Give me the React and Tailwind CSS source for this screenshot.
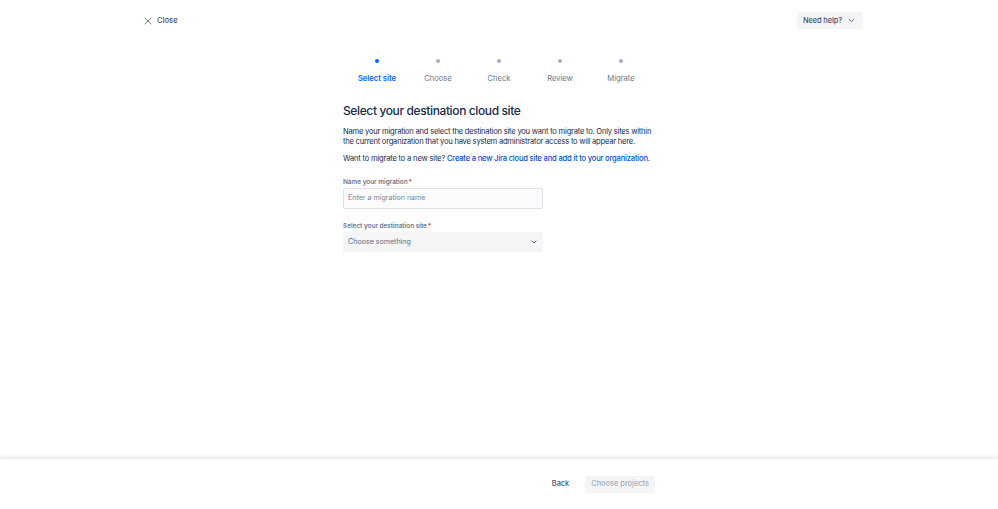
import { X, ChevronDown } from "lucide-react";

const steps = ["Select site", "Choose", "Check", "Review", "Migrate"];

function Stepper() {
  return (
    <div className="flex justify-center">
      {steps.map((s, i) => (
        <div key={s} className="w-[61px] flex flex-col items-center">
          <div
            className={
              i === 0
                ? "w-[4px] h-[4px] rounded-full bg-[#0065ff]"
                : "w-[4px] h-[4px] rounded-full bg-[#a5adba]"
            }
          />
          <div
            className={
              i === 0
                ? "mt-[10px] text-[7.6px] leading-[11px] font-semibold text-[#0065ff]"
                : "mt-[10px] text-[7.6px] leading-[11px] text-[#6b778c]"
            }
          >
            {s}
          </div>
        </div>
      ))}
    </div>
  );
}

export default function App() {
  return (
    <div
      className="h-screen flex flex-col bg-white text-[#172b4d]"
      style={{ fontFamily: "Inter, 'Noto Sans', sans-serif" }}
    >
      <div className="flex-1">
        {/* top bar */}
        <div className="w-[721px] ml-[142px] pt-[12px] flex items-center justify-between">
          <button className="flex items-center gap-[3px] h-[17px] text-[7.6px] font-medium text-[#42526e]">
            <X size={12} strokeWidth={1.5} />
            Close
          </button>
          <button className="flex items-center gap-[5px] h-[17px] pl-[6px] pr-[7px] rounded-[2px] bg-[#f4f5f7] text-[7.4px] font-medium tracking-[-0.1px] text-[#42526e]">
            Need help?
            <ChevronDown size={9} strokeWidth={2.2} />
          </button>
        </div>

        <div className="mt-[30px]">
          <Stepper />
        </div>

        <div className="w-[312px] mx-auto mt-[19px]">
          <h1 className="text-[12px] leading-[16px] font-medium tracking-[-0.38px] text-[#172b4d]">
            Select your destination cloud site
          </h1>
          <p className="mt-[8px] text-[7.6px] leading-[10px] tracking-[-0.23px] text-[#172b4d]">
            Name your migration and select the destination site you want to
            migrate to. Only sites within the current organization that you
            have system administrator access to will appear here.
          </p>
          <p className="mt-[7px] text-[7.6px] leading-[10px] tracking-[-0.2px] text-[#172b4d]">
            Want to migrate to a new site?{" "}
            <span className="font-medium text-[#0052cc]">
              Create a new Jira cloud site and add it to your organization.
            </span>
          </p>

          <div className="mt-[13px] text-[6.4px] leading-[10px] font-semibold text-[#6b778c]">
            Name your migration
            <span className="text-[#de350b] ml-[1px]">*</span>
          </div>
          <div className="mt-[1px] w-[200px] h-[21px] border border-[#dfe1e6] rounded-[2px] bg-[#fafbfc] flex items-center px-[4px] text-[7.1px] text-[#7a869a]">
            Enter a migration name
          </div>

          <div className="mt-[12px] text-[6.4px] leading-[10px] font-semibold text-[#6b778c]">
            Select your destination site
            <span className="text-[#de350b] ml-[1px]">*</span>
          </div>
          <div className="mt-[1px] w-[200px] h-[20px] rounded-[2px] bg-[#f4f5f7] flex items-center justify-between px-[5px] text-[7.1px] text-[#5e6c84]">
            Choose something
            <ChevronDown size={8} strokeWidth={2.5} className="text-[#42526e]" />
          </div>
        </div>
      </div>

      {/* footer */}
      <div className="h-[51px] shadow-[0_-2px_4px_rgba(9,30,66,0.08)] border-t border-[#ebecf0]">
        <div className="w-[312px] mx-auto h-full flex items-center justify-end gap-[16px]">
          <button className="text-[7.4px] font-medium text-[#42526e]">Back</button>
          <button className="h-[17px] px-[6px] rounded-[2px] bg-[#f4f5f7] text-[7.4px] font-medium text-[#a5adba]">
            Choose projects
          </button>
        </div>
      </div>
    </div>
  );
}
